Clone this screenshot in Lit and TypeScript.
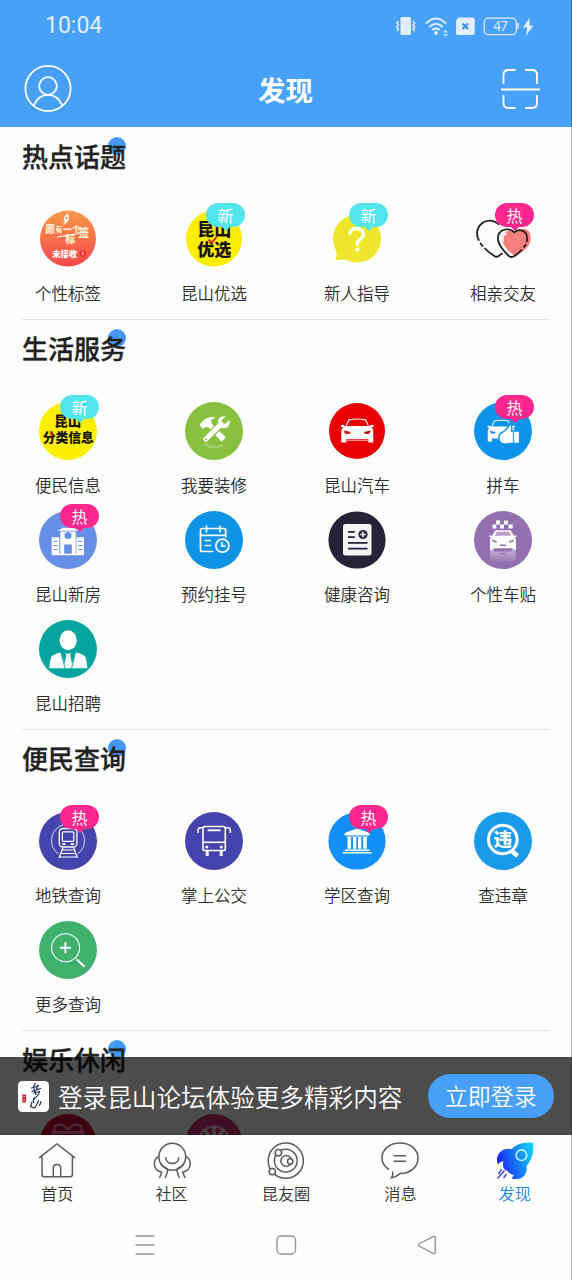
import { LitElement, html, svg, css, TemplateResult } from "lit";
import { customElement, property } from "lit/decorators.js";

type Badge = "new" | "hot";
interface Entry {
  label: string;
  icon: TemplateResult;
  badge?: Badge;
}
interface Section {
  title: string;
  entries: Entry[];
}

const disc = (color: string, r = 29) => svg`<circle cx="29" cy="29" r=${r} fill=${color}/>`;

const tag = svg`
  <defs><linearGradient id="sunset" x1="0" y1="0" x2="0" y2="1"><stop offset="0" stop-color="#f8994a"/><stop offset="1" stop-color="#f4484c"/></linearGradient></defs>
  <circle cx="29" cy="28.6" r="28" fill="url(#sunset)"/>
  <g class="glyph heavy" fill="#fff2cf">
    <text x="11.3" y="23.4" font-size="10">愿</text><text x="20" y="22.4" font-size="7">有</text>
    <text x="28.2" y="23.2" font-size="9">一</text><text x="37.3" y="22" font-size="8.5">个</text>
    <text x="44.5" y="27.4" font-size="11.500">签</text><text x="31.3" y="32.6" font-size="10">标</text>
    <text x="25.600" y="46.6" font-size="8.3" fill="#fff">未接收</text>
  </g>
  <path d="M18 27Q33 24.500 40 23.500" stroke="#fff" stroke-width="1" fill="none"/>
  <path d="M25 9q0-4 4-5q2 3 0 7l-3 3z" fill="#fff"/><circle cx="27.6" cy="8" r="1.2" fill="#f58a3c"/><path d="M25 11l-1 5 3-3z" fill="#ffe36b"/>
  <circle cx="43.8" cy="43.5" r="3.2" fill="#ea2f35"/><path d="M43.8 41.8v3.4" stroke="#fff" stroke-width=".9"/>`;

const selected = svg`
  <circle cx="29" cy="28.7" r="28" fill="#fdee04"/>
  <g class="glyph heavy" fill="#15130a"><text x="29.3" y="25.5" font-size="17">昆山</text><text x="29.3" y="46" font-size="17">优选</text></g>
  <path d="M23.5 29.5l3.2 3.4 5.2-6.4" stroke="#e0261c" stroke-width="1.9" fill="none"/>`;

const question = svg`
  <circle cx="29" cy="28.7" r="24" fill="#efe62b"/><path d="M7 36q3 8 .5 14q8 0 13-2.5z" fill="#efe62b"/>
  <path d="M22 23.2c0-6.2 13.4-6.6 13.4.6c0 5.4-6.2 5.2-6.2 10.2" fill="none" stroke="#fff" stroke-width="3.4" stroke-linecap="round"/><circle cx="29.3" cy="39.6" r="2.1" fill="#fff"/>`;

const hearts = svg`
  <path d="M40 22c4-4 10-4 13 0c3 5 2 11-2 16q-5 5-12 9c-7-6-13-12-13-19c2-7 9-9 14-6z" fill="#f47f7c" transform="translate(2 -.3)"/>
  <g fill="none" stroke="#24201f" stroke-width="1.8" stroke-linecap="round">
    <path d="M24.5 14.2C20 10 13 9.5 8.4 13C3.8 16.700 2 22 3.800 28l1 2M6.700 33.500l1.800 2.500M11 38.500c3 3.200 6.500 5.700 10 8q2 .8 4-.8l3-2.100"/>
    <path d="M40.500 22.300C36 18 28.500 18.300 25 23.500c-2.500 5 0 11 3.500 15.500c2.500 3.200 4.500 5.500 7 7.500q2 1 4 0c3-1.800 6-4 8-6.500M50 37l1.500-2.300M52.700 31.500c1-3.500.5-7-2-9.500c-2.500-2-6-2.500-9-.7"/>
  </g>
  <path d="M29.500 31c-1.500-3.500 0-6.500 3-7.500" stroke="#fff" stroke-width="1.400" fill="none" stroke-linecap="round"/>`;

const classified = svg`${disc("#fdee04")}
  <g class="glyph heavy" fill="#15130a"><text x="28.700" y="23.500" font-size="13.500">昆山</text><text x="29.300" y="39.500" font-size="12.800">分类信息</text></g>
  <circle cx="12.500" cy="32" r="1.600" fill="#e0261c"/>`;

const tools = svg`${disc("#87c13f")}
  <path d="M14.500 22.500l3.500-3.500q3-4 11-4.300l1.200 1.200q-3.200.6-4.200 3l1 3L41 35.200l-4.500 4.600L23.500 25.500q-2.200-1.300-3.500.300l-2.700 1z" fill="#fff"/>
  <path d="M20.800 37.300L35 23.200" stroke="#87c13f" stroke-width="7.500" stroke-linecap="round"/>
  <path d="M20.800 37.300L36 22" stroke="#fff" stroke-width="5" stroke-linecap="round"/>
  <path d="M41 14.200q-6-.5-7.600 3.300q-1.400 4 1.300 7.200q3.600 2.500 7.300.8q3.500-2.300 2.600-7.500l-4.300 3.700-3.500-.5-.3-3.300z" fill="#fff"/>
  <circle cx="21" cy="37.200" r="1" fill="#87c13f"/>
  <path d="M19 43l3-1 2 3 4-1 3 2 4-2 3-1" stroke="#fff" stroke-width="2" opacity=".25" fill="none"/>`;

const carBody = (light: string) => svg`
  <path d="M18.200 23.500L21 17.800Q29.300 16.200 37.600 17.800L40.400 23.500" fill="none" stroke="#fff" stroke-width="1.200"/>
  <path d="M13 23.200q2-1 4 .8h24.600q2-1.800 4-.8v1.800h-2.300q2 2 2 4.500v11h-5v-3.400H18.300v3.400h-5v-11q0-2.500 2-4.500H13z" fill="#fff"/>
  <path d="M16 28.500l6.500 1.400-.4 1.600q-3.700 1-5.300-.3zM42.600 28.500l-6.500 1.400.4 1.600q3.700 1 5.300-.3z" fill=${light}/>`;

const redCar = svg`${disc("#e60002", 28)}${carBody("#c4000a")}<path d="M18.500 38.200h21.500" stroke="#fff" stroke-width=".8"/>`;

const carpool = svg`${disc("#0d93ea")}
  <g transform="translate(2.600 3) scale(.84 .9)">${carBody("#0d93ea")}</g>
  <path d="M35.800 21.500q3.200 2.500 1.600 7.500h8.200v12.500h-9.500q-7 2-10-1.500q-2.500-5 .2-8.500q7.500-3.500 9.500-10z" fill="#fff" stroke="#0d93ea" stroke-width="1.400"/>
  <path d="M39.300 29.500v11.500" stroke="#0d93ea" stroke-width="1"/>`;

const estate = svg`${disc("#688fe6")}
  <g fill="#fff"><path d="M12.700 26.300h7.600v17.400h-7.600zM37.400 26.300H45v17.400h-7.600z"/><path d="M21.300 20.500h15.400v23.200H21.300z"/><path d="M18.500 19.800L24 16.800h10l6 3z"/><path d="M12.700 42.700H45v1.600H12.700z"/></g>
  <g fill="#688fe6"><circle cx="29" cy="24.500" r="3.600"/><path d="M25.200 33.500h7.600v9.200h-7.600z"/></g>
  <path d="M14.500 30.500h4M14.500 34.500h4M14.500 38.500h4M39.200 30.500h4M39.200 34.500h4M39.200 38.500h4" stroke="#688fe6" stroke-width="1.200"/>`;

const booking = svg`${disc("#0f93e6")}
  <g fill="none" stroke="#fff" stroke-width="1.700" stroke-linecap="round">
    <path d="M27.500 40.500H17.500q-2 0-2-2V19.500q0-2 2-2h21.200q2 0 2 2v6.300M15.500 24.400h25.200M21.500 15.200v5.500M35 15.200v5.500M20.300 29.500h5M20.300 34.500h5"/>
    <circle cx="37.400" cy="34.700" r="6.500"/><path d="M37 31.500v3.700h3"/>
  </g>`;

const health = svg`${disc("#252338", 28.600)}
  <rect x="15" y="13" width="28.500" height="31.500" rx="2.500" fill="#f3f3f3"/>
  <path d="M20 20.800h6.800M20 26.200h6.800M20 31.800h19.500M20 37.700h19.500" stroke="#252338" stroke-width="1.700"/>
  <circle cx="35" cy="23.500" r="4.600" fill="#252338"/><path d="M35 20.700v5.600M32.200 23.500h5.600" stroke="#f3f3f3" stroke-width="1.600"/>`;

const taxi = svg`${disc("#9470b1")}
  <path d="M22 9.600h4v4h-4zM30 9.600h4v4h-4zM18.500 13.600h3.800v4h-3.800zM26 13.600h4v4h-4zM34.500 13.600h4.200v4h-4.200z" fill="#fff"/>
  <path d="M21.500 19.300h15l3.500 5.500 2.500-.6v1.900l-1.500.6q1.300 2 1 5v7h-3.500v-1.500h-19v1.500H16v-7q-.3-3 1-5l-1.500-.6v-1.900l2.500.6z" fill="#fff"/>
  <path d="M22.800 20.800h12.400l2 4H20.800z" fill="#b79fcb"/><path d="M18.200 29.500l4.500 1.500M39.800 29.500l-4.500 1.500M26 34.300h6" stroke="#9470b1" stroke-width="1.600"/>
  <defs><linearGradient id="mirror" x1="0" y1="0" x2="0" y2="1"><stop offset="0" stop-color="#fff" stop-opacity=".45"/><stop offset="1" stop-color="#fff" stop-opacity=".08"/></linearGradient></defs>
  <path d="M16.300 39h3.500v1.500h18.500V39h3.500v9q-1 2-3 2.500h-20q-2-.5-2.500-2.500z" fill="url(#mirror)"/><path d="M26 42.500h6" stroke="#9470b1" stroke-width="1.400"/>`;

const recruit = svg`${disc("#05a49f")}
  <ellipse cx="29.200" cy="20.300" rx="8.600" ry="10" fill="#fff"/>
  <path d="M22 32.500q-8 1.500-9.800 4.500Q10.500 42 10.200 48.300h38.200q-.3-6.300-2-11.300q-1.800-3-9.800-4.500L33 44l-1.700-8.500.8-2H26.500l.8 2L25.500 44z" fill="#fff"/>
  <path d="M22 32.500l4 15.800M36.600 32.500l-4 15.800" stroke="#05a49f" stroke-width=".9"/>`;

const metro = svg`${disc("#4644ac")}
  <g fill="none" stroke="#fff">
    <path d="M19.500 42A16.500 16.500 0 1 1 38.500 42" stroke-width="1" stroke="#d9d9f5"/>
    <rect x="20.300" y="16.500" width="17.600" height="18.500" rx="3.500" stroke-width="1.300"/><rect x="23.400" y="19.800" width="11.400" height="9.500" rx="1" stroke-width="1.200"/>
    <path d="M23.200 32.200h3.300M31.800 32.200h3.300" stroke-width="1.800"/><path d="M24 35.500L20 46M34.500 35.500L38.500 46M23.500 38h11M22 41.500h14M20.800 45h16.600" stroke-width="1.200"/>
  </g>`;

const bus = svg`${disc("#4644ac")}
  <g fill="none" stroke="#fff" stroke-width="1.600">
    <rect x="18" y="14.500" width="22.300" height="24" rx="1.800"/><path d="M18 30.300h22.300"/>
    <path d="M18 15.800h-3q-1.800.2-2 2.200v3M40.300 15.800h3q1.800.2 2 2.200v3" stroke-width="1.500"/><path d="M22.700 18.300h12.800" stroke-width="1.900"/>
  </g>
  <g fill="#fff"><circle cx="21.800" cy="35" r="1.600"/><circle cx="36.300" cy="35" r="1.600"/><path d="M20.700 38.500h3v5.500h-3zM34.700 38.500h3v5.500h-3z"/></g>`;

const school = svg`${disc("#138ff7", 28.600)}
  <g fill="#fff"><path d="M16.200 23.200q0-2.500 3-3.200L29 16.500l9.900 3.500q3 .7 3 3.200z"/><path d="M19.500 25h3.600v11.700h-3.600zM25 25h3.300v11.700H25zM30 25h3.300v11.700H30zM35.200 25h3.600v11.700h-3.600z"/><path d="M16.800 37.400h24.600v1.600H16.800zM14.800 40h28.800v1.500H14.800z"/></g>
  <path d="M18 24.200h22.400" stroke="#fff" stroke-width=".7"/>`;

const violation = svg`${disc("#1a9bea")}
  <circle cx="28.800" cy="27.500" r="14.300" fill="none" stroke="#fff" stroke-width="3"/><path d="M38.500 39.500l5 4.500" stroke="#fff" stroke-width="4.600"/>
  <text class="glyph heavy" x="28.800" y="34.300" font-size="18.500" fill="#fff">违</text>`;

const more = svg`${disc("#41b06d")}
  <g fill="none" stroke="#fff"><circle cx="26.600" cy="26.700" r="14" stroke-width="1.100"/><path d="M26.400 21.300v11M20.900 26.800h11" stroke-width="1.900"/><path d="M38 38.500l7.500 7.300" stroke-width="2.100"/><path d="M36.500 37l1.500 1.500" stroke-width="1"/></g>`;

const gift = svg`${disc("#c8003c", 28)}
  <g fill="none" stroke="#ff8aa8" stroke-width="2.400"><path d="M29 17q-5-8-13-4q-3 5 3 6.500M29 17q5-8 13-4q3 5-3 6.500M14 19.500h30v8H14z"/></g>`;
const wheel = svg`${disc("#cf2f72", 28)}
  <circle cx="29" cy="29" r="15.500" fill="none" stroke="#ffd3e6" stroke-width="2"/><path d="M29 14v14M20 17l7 10M38 17l-7 10M15 25l10 3M43 25l-10 3" stroke="#ffd3e6" stroke-width="3.500"/>`;

const sections: Section[] = [
  { title: "热点话题", entries: [
    { label: "个性标签", icon: tag },
    { label: "昆山优选", icon: selected, badge: "new" },
    { label: "新人指导", icon: question, badge: "new" },
    { label: "相亲交友", icon: hearts, badge: "hot" },
  ] },
  { title: "生活服务", entries: [
    { label: "便民信息", icon: classified, badge: "new" },
    { label: "我要装修", icon: tools },
    { label: "昆山汽车", icon: redCar },
    { label: "拼车", icon: carpool, badge: "hot" },
    { label: "昆山新房", icon: estate, badge: "hot" },
    { label: "预约挂号", icon: booking },
    { label: "健康咨询", icon: health },
    { label: "个性车贴", icon: taxi },
    { label: "昆山招聘", icon: recruit },
  ] },
  { title: "便民查询", entries: [
    { label: "地铁查询", icon: metro, badge: "hot" },
    { label: "掌上公交", icon: bus },
    { label: "学区查询", icon: school, badge: "hot" },
    { label: "查违章", icon: violation },
    { label: "更多查询", icon: more },
  ] },
  { title: "娱乐休闲", entries: [
    { label: "", icon: gift },
    { label: "", icon: wheel },
  ] },
];

const tabs: { label: string; icon: TemplateResult; active?: boolean }[] = [
  { label: "首页", icon: svg`<path d="M2 16.800L20 3l18 13.800M5 14.800v18.700q0 2.200 2.200 2.200h26q2.200 0 2.200-2.200V14.800M16.300 35.700v-9q0-3.300 3.700-3.300t3.700 3.300v9"/>` },
  { label: "社区", icon: svg`<circle cx="20.300" cy="15.700" r="13.400"/><path d="M13.800 16.200q0 6.200 6.500 6.200t6.500-6.200"/>
    <path d="M7 15.500Q2.300 17.500 2.300 23Q2.800 29.500 9.800 31.300L7.500 37M8.200 21.500q1.300 3.500 5 5q3 1.200 2.300 4L13.300 37"/>
    <path d="M33.600 15.500Q38.300 17.500 38.300 23Q37.800 29.500 30.800 31.300L33.100 37M32.400 21.500q-1.300 3.500-5 5q-3 1.200-2.300 4L27.300 37"/>` },
  { label: "昆友圈", icon: svg`<circle cx="19.800" cy="19.700" r="17.600"/><circle cx="19.800" cy="19.700" r="11.400"/><circle cx="20.300" cy="20" r="5.400"/><circle class="node" cx="12.400" cy="11.800" r="3.200"/><circle class="node" cx="6.300" cy="30.600" r="3.200"/><circle class="node" cx="24.200" cy="20.400" r="2.700"/>` },
  { label: "消息", icon: svg`<path d="M9 28.500Q2 24 2 17C2 8.500 9.500 2 20 2s18 6.500 18 15.200S30.500 32.500 20 32.600q-3.500 3.300-8.600 4.200q2-3.300 1.200-6.300M13.500 14.700h12.500M13.500 20.300h12.500"/>` },
  { label: "发现", active: true, icon: svg`
    <defs><linearGradient id="flame" x1="0" y1=".6" x2="1" y2=".25"><stop offset="0" stop-color="#1c1cff"/><stop offset=".5" stop-color="#1678f4"/><stop offset="1" stop-color="#12cdf5"/></linearGradient></defs>
    <path d="M38 1.700Q24 .5 16.500 8Q8 6.500 3.500 13Q.5 18.500 3 23.500Q5 20 8.500 20.500Q6.500 27.500 12 29.800Q17 35 19 33.500Q17.500 36.500 16.800 37.500Q25 39.500 29.500 34.500Q32.500 30 31.500 25Q40 15.500 38 1.700z" fill="url(#flame)" stroke="none"/>
    <circle cx="26.500" cy="14.200" r="5.300" fill="none" stroke="#c5efff" stroke-width="1.600"/>
    <path d="M6.500 28.500L3.500 33M9.500 29.500L2.500 37.500M11.500 33L8.500 37" stroke="#3b42d8" stroke-width="1.400"/>` },
];

@customElement("feature-tile")
export class FeatureTile extends LitElement {
  @property({ attribute: false }) entry!: Entry;
  static styles = css`
    :host { display: flex; flex-direction: column; align-items: center; width: 92px; height: 108.900px; }
    .icon { position: relative; width: 58px; height: 58px; flex: none; }
    .disc { display: block; width: 58px; height: 58px; }
    .label { margin-top: 13.300px; font-size: 16.500px; font-weight: 350; line-height: 24px; white-space: nowrap; color: #2c2c2c; }
    .glyph { font-weight: 700; text-anchor: middle; }
    .heavy { font-weight: 900; }
    .badge { position: absolute; left: 21px; top: -7px; width: 39px; height: 24px; border-radius: 12px; color: #fff; font-size: 16px; line-height: 24px; text-align: center; }
    .badge::after { content: ""; position: absolute; left: 14.5px; top: 23px; border: 5px solid transparent; border-bottom-width: 0; }
    .new { background: #54e5ec; }
    .new::after { border-top-color: #54e5ec; }
    .hot { background: #fd278d; }
    .hot::after { border-top-color: #fd278d; }
  `;
  render() {
    const { icon, label, badge } = this.entry;
    return html`<div class="icon">
        <svg class="disc" viewBox="0 0 58 58">${icon}</svg>
        ${badge ? html`<span class="badge ${badge}">${badge === "new" ? "新" : "热"}</span>` : null}
      </div>
      <div class="label">${label}</div>`;
  }
}

@customElement("app-root")
export class AppRoot extends LitElement {
  static styles = css`
    :host { display: flex; flex-direction: column; position: relative; width: 572px; height: 1280px; overflow: hidden; background: #fefefe; color: #222; font-family: "Noto Sans CJK SC", sans-serif; }
    .edge { position: absolute; top: 0; right: 0; bottom: 0; width: 1px; background: rgba(0, 0, 0, 0.3); }
    .top { flex: none; height: 127px; background: #48a1f8; color: #fff; }
    .status { display: flex; align-items: center; justify-content: space-between; height: 51px; padding: 0 37px 0 45px; color: #e1effd; }
    .time { font: 400 23px/52px Roboto, sans-serif; }
    .signals { width: 140px; height: 24px; }
    .signal-text { font: 14px "Open Sans", sans-serif; }
    .bar { display: grid; grid-template-columns: 48px 1fr 48px; align-items: center; height: 75px; padding: 0 28px 0 24px; }
    .bar-icon { width: 48px; height: 48px; fill: none; stroke: #fff; stroke-width: 1.8; overflow: visible; }
    .heading { padding-left: 3px; text-align: center; font-size: 27.500px; font-weight: 700; line-height: 77px; }
    .main { flex: 1; min-height: 0; position: relative; overflow: hidden; padding-top: 1px; }
    .section { margin: 0 22px; border-bottom: 1px solid #e4e4e4; }
    .section-head { height: 81.600px; }
    .section:not(:first-child) .section-head { height: 81.800px; }
    .title { position: relative; display: inline-block; vertical-align: top; line-height: 55px; font-size: 26px; font-weight: 500; -webkit-text-stroke: 0.35px #222; }
    .dot { position: absolute; left: 86px; top: 9px; width: 18px; height: 18px; border-radius: 50%; background: #4599f2; }
    .title-text { position: relative; }
    .grid { display: grid; grid-template-columns: 146px 143px 146px 92px; padding-bottom: .5px; }
    .banner { position: absolute; left: 0; right: 0; bottom: 0; height: 78px; display: flex; align-items: center; padding: 0 18.500px 0 18px; background: rgba(0, 0, 0, 0.7); color: #fff; box-sizing: border-box; }
    .logo { width: 31px; height: 31px; flex: none; }
    .pitch { flex: 1; margin-left: 9px; font-size: 24.600px; font-weight: 350; line-height: 40px; white-space: nowrap; padding-bottom: 1px; }
    .login { width: 125.500px; height: 44px; border-radius: 22px; background: #489ff8; font-size: 23px; font-weight: 350; line-height: 43px; text-align: center; }
    .tabs { flex: none; display: grid; grid-template-columns: repeat(5, 1fr); height: 75px; }
    .tab { display: flex; flex-direction: column; align-items: center; padding-top: 6px; font-size: 16.200px; font-weight: 350; color: #333; }
    .tab-icon { width: 40px; height: 40px; fill: none; stroke: #5b5b5b; stroke-width: 1.5; }
    .node { fill: #fefefe; }
    .tab-label { line-height: 24px; }
    .active { color: #1687dc; }
    .system { flex: none; display: flex; justify-content: center; height: 70px; padding-top: 24px; box-sizing: border-box; gap: 119px; }
    .key { width: 22px; height: 22px; fill: none; stroke: #949494; stroke-width: 1.4; }
  `;

  render() {
    return html`
      <header class="top">
        <div class="status">
          <span class="time">10:04</span>
          <svg class="signals" viewBox="395 14 140 24">
            <g fill="#e1effd">
              <rect x="400.500" y="17" width="10.500" height="18" rx="1.200"/>
              <path d="M458.500 17.500H472.500q2.200 0 2.200 2.200V33q0 2-2 2H458q-2 0-2-2V21z"/>
              <path d="M529.500 18l-6.500 9.500h4.300L525.800 36l7.700-10.500h-4z"/>
              <path d="M443 32.500l2.500-3 2.500 3zM443 34l2.500 3 2.500-3z" opacity=".75"/>
              <circle cx="436" cy="33" r="1.900"/>
              <path d="M517.300 23h1.500v6h-1.500z"/>
            </g>
            <g fill="none" stroke="#e1effd" stroke-width="1.800">
              <path d="M398.500 21l-1.700 2 1.700 2-1.700 2 1.700 2-1.500 2M413 21l1.700 2-1.700 2 1.700 2-1.700 2 1.500 2" stroke-width="1.500"/>
              <path d="M426 23.500q10-10 20 0M429.200 27q6.800-6.500 13.600 0M432.300 30q3.700-3.300 7.400 0" stroke-width="2.100"/>
              <rect x="484.300" y="18.200" width="32" height="16.500" rx="4" stroke-width="1.200"/>
            </g>
            <path d="M462.500 23.500l5.500 5.500M468 23.500l-5.500 5.500" stroke="#3f8fe0" stroke-width="2"/>
            <text class="signal-text" x="493" y="31.400" textLength="15" fill="#e1effd">47</text>
          </svg>
        </div>
        <div class="bar">
          <svg class="bar-icon" viewBox="0 3 48 48"><circle cx="24" cy="25.500" r="22.600"/><circle cx="24" cy="23" r="8.800"/><path d="M10 42q4.500-10.200 14-10.200t14 10.200"/></svg>
          <div class="heading">发现</div>
          <svg class="bar-icon" viewBox="0 2 48 48"><path d="M7.500 20V11q0-5 5-5h7M29 6h7q5 0 5 5v9M7.500 31v8q0 5 5 5h7M29 44h7q5 0 5-5v-8M5 25.500h39"/></svg>
        </div>
      </header>
      <main class="main">
        ${sections.map((s) => html`<section class="section">
          <div class="section-head"><div class="title"><span class="dot"></span><span class="title-text">${s.title}</span></div></div>
          <div class="grid">${s.entries.map((e) => html`<feature-tile .entry=${e}></feature-tile>`)}</div>
        </section>`)}
        <div class="banner">
          <svg class="logo" viewBox="0 0 31 31"><rect width="31" height="31" rx="4.500" fill="#fff"/>
            <path d="M17 2.500l-1.500 3.500M13.500 7l7-2M14 10.500l8.500-3M16 7.500l2 6M15.500 12l6-1.500q-1 5-6 7M20 4q-2 3-1 4M17 17q-3 3-1 4.500M14 21l-1.500 5M20.500 19.500l-3 6.500q-2 2-4-.5M23 20.500l-1.500 4" fill="none" stroke="#1d2c57" stroke-width="1.200" stroke-linecap="round"/>
            <rect x="4.300" y="13.500" width="3.800" height="8" rx="1" fill="#b8282d"/><path d="M5.300 15.500h1.800M5.300 19h1.800" stroke="#fff" stroke-width=".7"/></svg>
          <div class="pitch">登录昆山论坛体验更多精彩内容</div>
          <div class="login">立即登录</div>
        </div>
      </main>
      <nav class="tabs">
        ${tabs.map((t) => html`<div class="tab ${t.active ? "active" : ""}"><svg class="tab-icon" viewBox="0 0 40 40">${t.icon}</svg><span class="tab-label">${t.label}</span></div>`)}
      </nav>
      <div class="system">
        <svg class="key" viewBox="0 0 22 22"><path d="M1.500 2h19M1.500 11h19M1.500 20h19"/></svg>
        <svg class="key" viewBox="0 0 22 22"><rect x="2" y="2" width="18.500" height="18" rx="4"/></svg>
        <svg class="key" viewBox="0 0 22 22"><path d="M3 10q-1 1 0 2l14.500 7.500q1.700.6 1.700-1V3.500q0-1.600-1.700-1z"/></svg>
      </div>
      <div class="edge"></div>
    `;
  }
}
